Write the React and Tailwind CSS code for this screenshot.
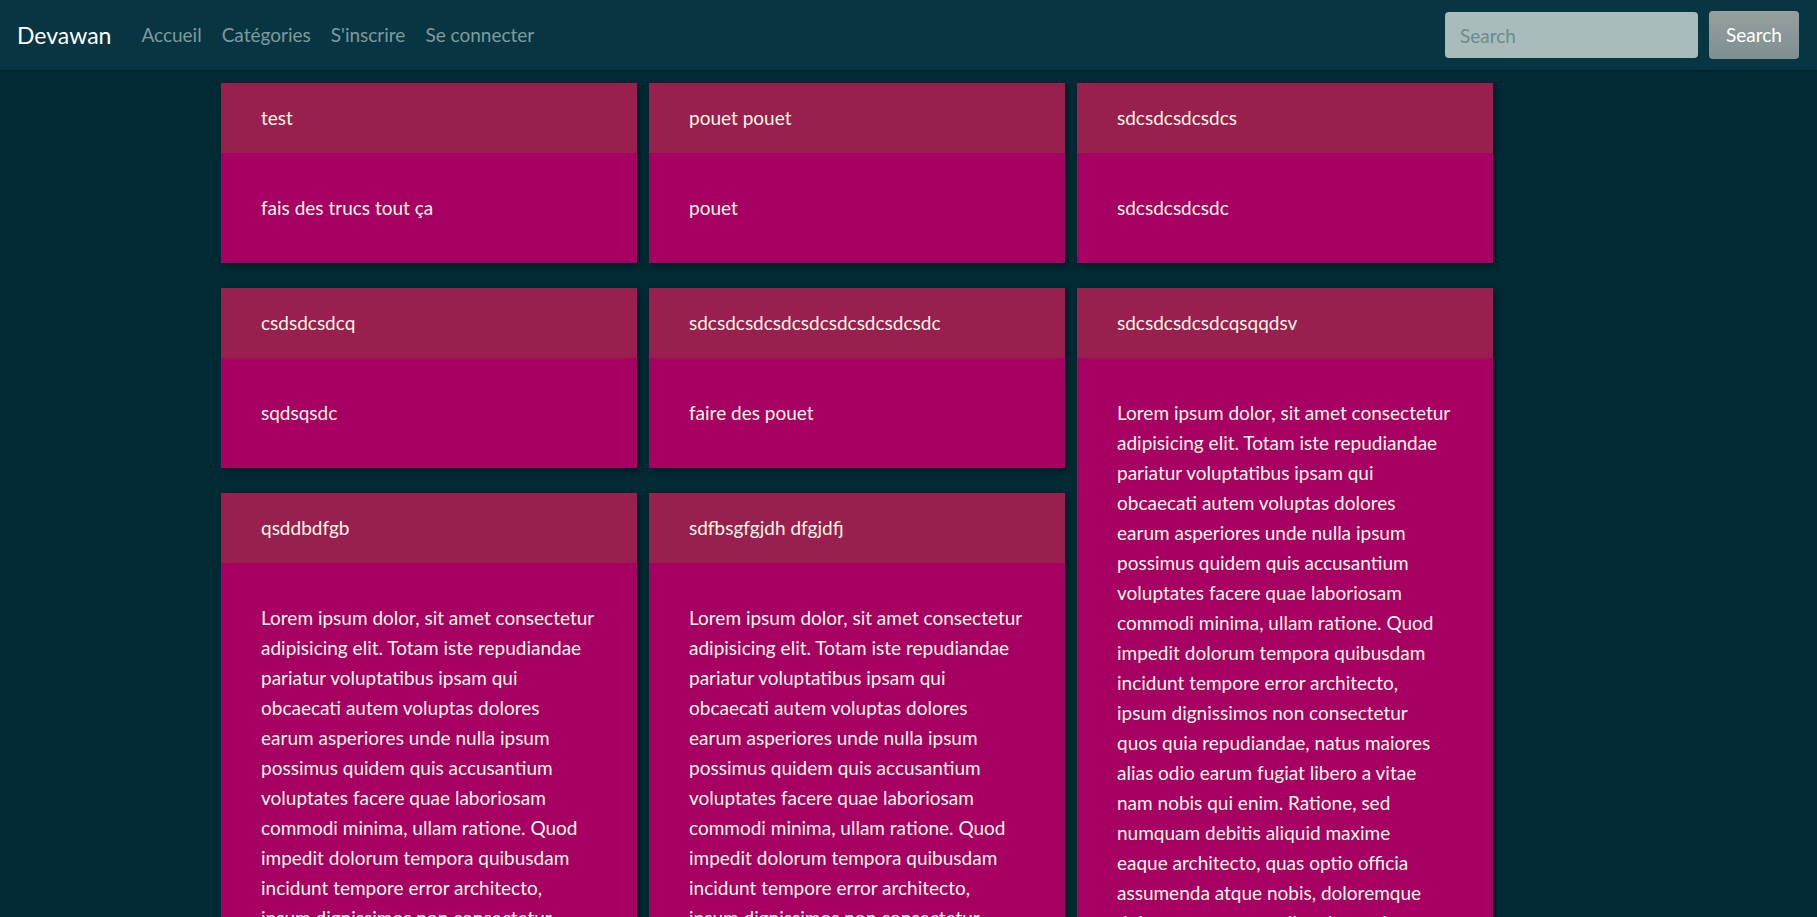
import React from 'react';

// lines broken where the reference wraps them
const lorem = [
  'Lorem ipsum dolor, sit amet consectetur',
  'adipisicing elit. Totam iste repudiandae',
  'pariatur voluptatibus ipsam qui',
  'obcaecati autem voluptas dolores',
  'earum asperiores unde nulla ipsum',
  'possimus quidem quis accusantium',
  'voluptates facere quae laboriosam',
  'commodi minima, ullam ratione. Quod',
  'impedit dolorum tempora quibusdam',
  'incidunt tempore error architecto,',
  'ipsum dignissimos non consectetur',
  'quos quia repudiandae, natus maiores',
  'alias odio earum fugiat libero a vitae',
  'nam nobis qui enim. Ratione, sed',
  'numquam debitis aliquid maxime',
  'eaque architecto, quas optio officia',
  'assumenda atque nobis, doloremque',
  'dolorum tempora quibusdam voluptates',
  'error architecto ipsum.',
];

const columns = [
  [
    { title: 'test', body: ['fais des trucs tout ça'] },
    { title: 'csdsdcsdcq', body: ['sqdsqsdc'] },
    { title: 'qsddbdfgb', body: lorem },
  ],
  [
    { title: 'pouet pouet', body: ['pouet'] },
    { title: 'sdcsdcsdcsdcsdcsdcsdcsdcsdc', body: ['faire des pouet'] },
    { title: 'sdfbsgfgjdh dfgjdfj', body: lorem },
  ],
  [
    { title: 'sdcsdcsdcsdcs', body: ['sdcsdcsdcsdc'] },
    { title: 'sdcsdcsdcsdcqsqqdsv', body: lorem },
  ],
];

const Card = ({ title, body }) => (
  <div className="shadow-[3px_3px_6px_rgba(0,0,0,0.35)]">
    <div className="bg-[#981f4e] px-[40px] py-[20px] leading-[30px]">{title}</div>
    <div className="bg-[#a50062] p-[40px] leading-[30px]">
      <p>
        {body.map((line, i) => (
          <React.Fragment key={i}>
            {i > 0 && <br />}
            {line}
          </React.Fragment>
        ))}
      </p>
    </div>
  </div>
);

export default function App() {
  return (
    <div
      className="min-h-screen bg-[#012a35] text-[19px] text-[#fdf6e3]"
      style={{ fontFamily: 'Lato, "Open Sans", sans-serif' }}
    >
      <nav className="flex h-[70px] items-center bg-[#073642] pl-[17px] pr-[18px] shadow-[0_1px_2px_rgba(0,0,0,0.3)]">
        <span className="mr-[20px] text-[23px] text-white">Devawan</span>
        <div className="flex text-[19px] text-[#7f9a9c]">
          <a className="px-[10px]">Accueil</a>
          <a className="px-[10px]">Catégories</a>
          <a className="px-[10px]">S'inscrire</a>
          <a className="px-[10px]">Se connecter</a>
        </div>
        <div className="ml-auto flex items-center gap-[11px]">
          <input
            placeholder="Search"
            className="h-[46px] w-[253px] rounded-[4px] bg-[#a9bcbb] px-[15px] text-[19px] text-[#334] placeholder:text-[#6f8a8c] outline-none"
          />
          <button className="h-[48px] w-[90px] rounded-[4px] bg-gradient-to-b from-[#979f9f] to-[#7e8f91] text-[19px] text-white">
            Search
          </button>
        </div>
      </nav>
      <main className="ml-[221px] flex items-start gap-[12px] pt-[13px]">
        {columns.map((col, i) => (
          <div key={i} className="flex w-[416px] flex-col gap-[25px]">
            {col.map((c) => (
              <Card key={c.title} {...c} />
            ))}
          </div>
        ))}
      </main>
    </div>
  );
}
